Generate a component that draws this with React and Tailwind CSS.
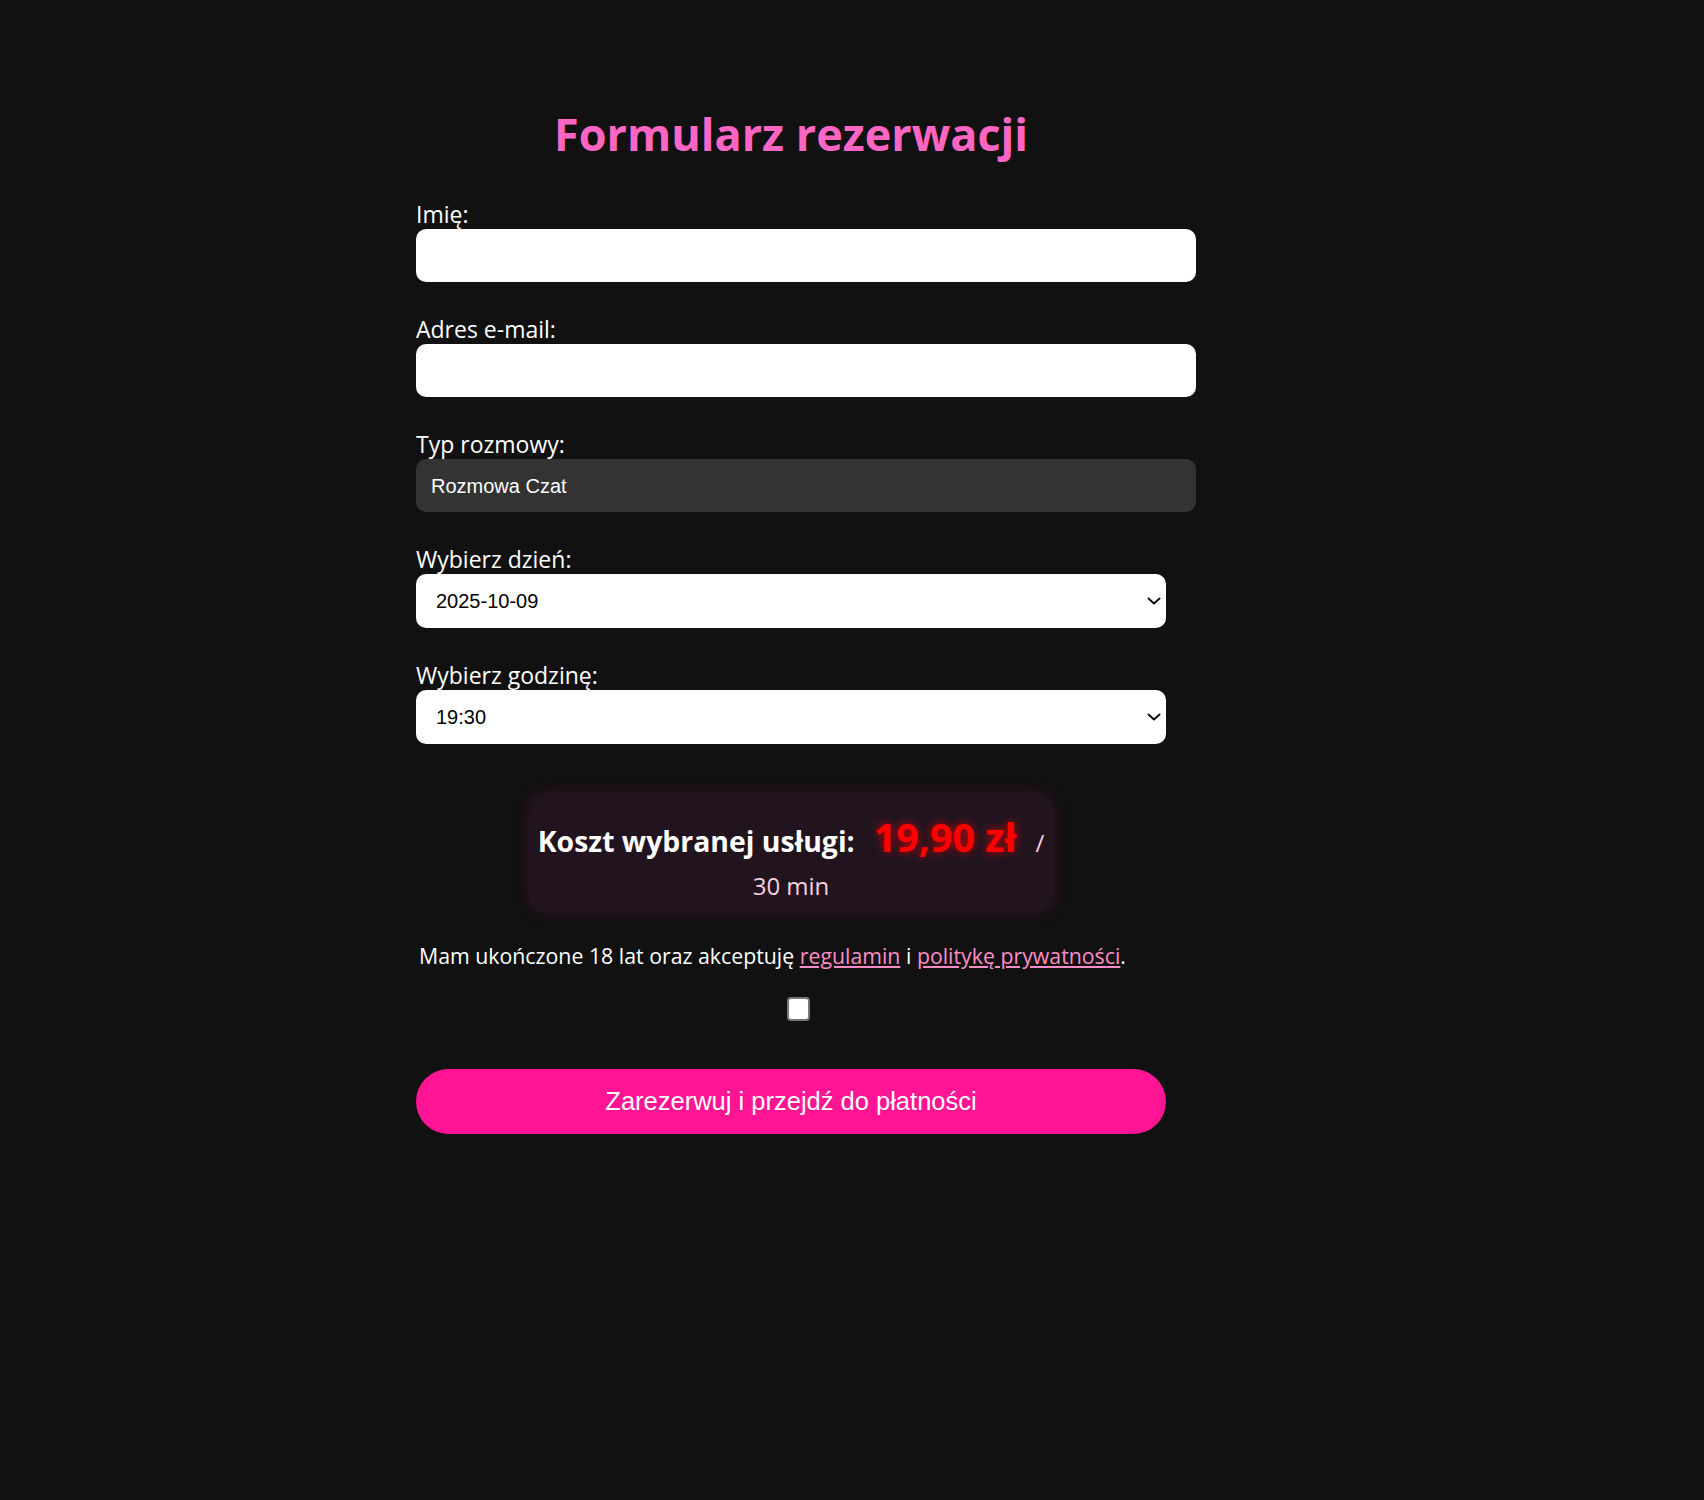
import React from "react";

function Chevron() {
  return (
    <svg
      className="pointer-events-none absolute right-[5px] top-1/2 -translate-y-1/2"
      width="14"
      height="8"
      viewBox="0 0 14 8"
      fill="none"
    >
      <path d="M1.5 1.5L7 6.5L12.5 1.5" stroke="#111" strokeWidth="2" strokeLinecap="round" strokeLinejoin="round" />
    </svg>
  );
}

function Field({ label, children, last }) {
  return (
    <div className={last ? "" : "mb-[33px]"}>
      <label className="mb-[1px] block text-[23px] leading-[28px] text-white">{label}</label>
      {children}
    </div>
  );
}

export default function App() {
  return (
    <div className="min-h-[1500px] bg-[#111111] font-['Open_Sans',sans-serif] text-white">
      <div className="ml-[416px] w-[750px] pt-[106px]">
        <h1 className="mb-[38px] text-center text-[45px] font-bold leading-[56px] text-[#ff66c4]">
          Formularz rezerwacji
        </h1>

        <Field label="Imię:">
          <input
            type="text"
            className="block h-[53px] w-[780px] rounded-[10px] border-0 bg-white px-[15px] font-['Liberation_Sans',Arial,sans-serif] text-[20px] text-black outline-none"
          />
        </Field>

        <Field label="Adres e-mail:">
          <input
            type="email"
            className="block h-[53px] w-[780px] rounded-[10px] border-0 bg-white px-[15px] font-['Liberation_Sans',Arial,sans-serif] text-[20px] text-black outline-none"
          />
        </Field>

        <Field label="Typ rozmowy:">
          <div className="flex h-[53px] w-[780px] items-center rounded-[10px] bg-[#333333] px-[15px] font-['Liberation_Sans',Arial,sans-serif] text-[20px] text-white">
            Rozmowa Czat
          </div>
        </Field>

        <Field label="Wybierz dzień:">
          <div className="relative h-[54px] w-[750px]">
            <select className="block h-[54px] w-[750px] appearance-none rounded-[10px] border-0 bg-white pl-[20px] font-['Liberation_Sans',Arial,sans-serif] text-[20px] text-black outline-none">
              <option>2025-10-09</option>
            </select>
            <Chevron />
          </div>
        </Field>

        <Field label="Wybierz godzinę:" last>
          <div className="relative h-[54px] w-[750px]">
            <select className="block h-[54px] w-[750px] appearance-none rounded-[10px] border-0 bg-white pl-[20px] font-['Liberation_Sans',Arial,sans-serif] text-[20px] text-black outline-none">
              <option>19:30</option>
            </select>
            <Chevron />
          </div>
        </Field>

        <div className="mx-auto mt-[49px] w-[525px] rounded-[18px] bg-[#21141f] pb-[6px] pt-[23px] text-center shadow-[0_0_18px_rgba(255,20,147,0.12)]">
          <div className="flex items-baseline justify-center leading-[42px]">
            <strong className="text-[28.4px] font-bold text-white">Koszt wybranej usługi:</strong>
            <span className="mx-[19px] text-[39.4px] font-bold text-[#ff0000] [text-shadow:0_0_8px_rgba(255,0,0,0.8)]">
              19,90 zł
            </span>
            <span className="text-[24px] text-[#f8cfe0]">/</span>
          </div>
          <div className="text-[24px] leading-[43px] text-[#f8cfe0]">30 min</div>
        </div>

        <p className="mt-[28px] pl-[3px] text-[21.3px] leading-[30px] text-white">
          Mam ukończone 18 lat oraz akceptuję{" "}
          <a href="#" className="text-[#ff8cc6] underline">regulamin</a> i{" "}
          <a href="#" className="text-[#ff8cc6] underline">politykę prywatności</a>.
        </p>

        <div className="mt-[26px] flex justify-center pl-[14px]">
          <input
            type="checkbox"
            className="h-[24px] w-[23px] appearance-none rounded-[4px] border-2 border-[#767676] bg-white"
          />
        </div>

        <button className="mt-[48px] block h-[65px] w-[750px] rounded-full bg-[#ff1493] font-['Liberation_Sans',Arial,sans-serif] text-[25.5px] text-white">
          Zarezerwuj i przejdź do płatności
        </button>
      </div>
    </div>
  );
}
